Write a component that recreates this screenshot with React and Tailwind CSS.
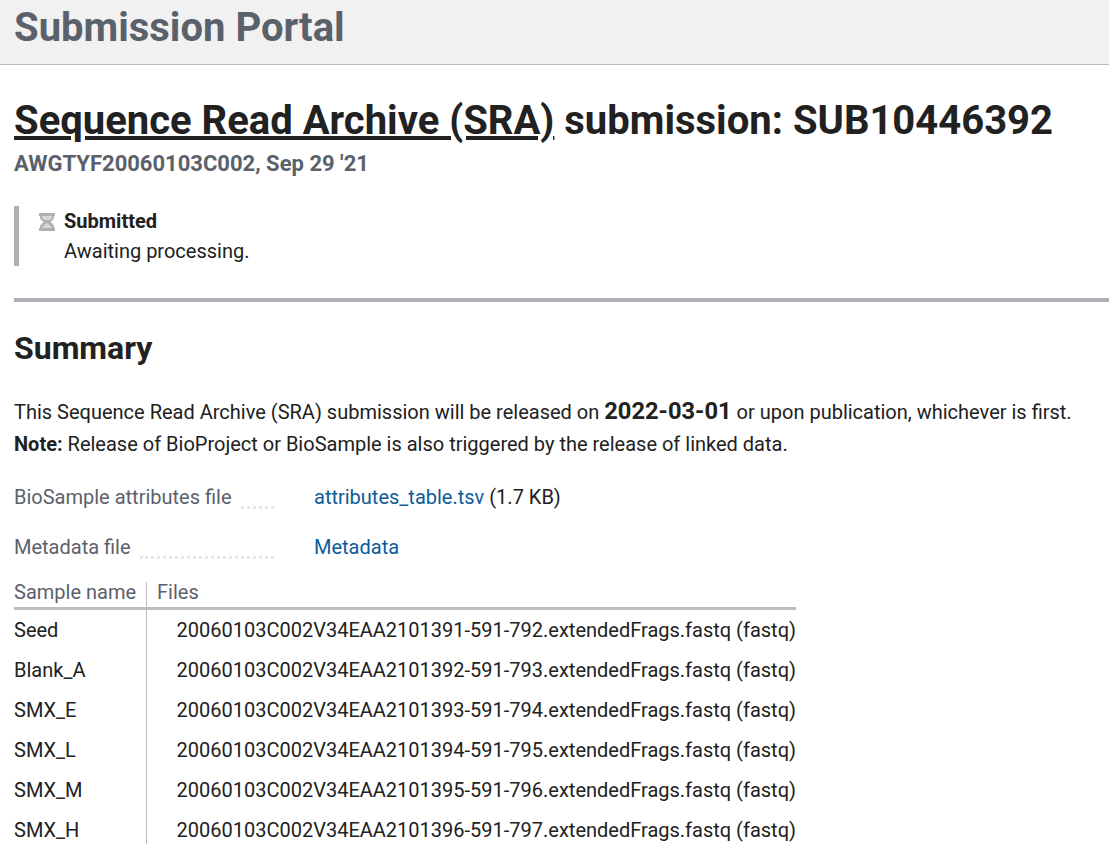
import React from 'react';

const rows = [
  ['Seed', '20060103C002V34EAA2101391-591-792.extendedFrags.fastq (fastq)'],
  ['Blank_A', '20060103C002V34EAA2101392-591-793.extendedFrags.fastq (fastq)'],
  ['SMX_E', '20060103C002V34EAA2101393-591-794.extendedFrags.fastq (fastq)'],
  ['SMX_L', '20060103C002V34EAA2101394-591-795.extendedFrags.fastq (fastq)'],
  ['SMX_M', '20060103C002V34EAA2101395-591-796.extendedFrags.fastq (fastq)'],
  ['SMX_H', '20060103C002V34EAA2101396-591-797.extendedFrags.fastq (fastq)'],
];

function Hourglass() {
  return (
    <svg width="16" height="18" viewBox="0 0 16 18" className="shrink-0">
      <path d="M0 0h16v3h-1v1c0 2-2 4-4 5 2 1 4 3 4 5v1h1v3H0v-3h1v-1c0-2 2-4 4-5-2-1-4-3-4-5V3H0z" fill="#d6d7d9" />
      <path d="M0 0h16v3h-1v1c0 2-2 4-4 5 2 1 4 3 4 5v1h1v3H0v-3h1v-1c0-2 2-4 4-5-2-1-4-3-4-5V3H0zM3 3v1c0 1 1 2 2 3h6c1-1 2-2 2-3V3zM8 10c-2 1-4 3-5 5h10c-1-2-3-4-5-5z" fill="#aeb0b5" fillRule="evenodd" />
    </svg>
  );
}

export default function App() {
  return (
    <div className="h-[844px] overflow-hidden bg-white text-[#212121] font-['Roboto',sans-serif]">
      <header className="h-[65px] bg-[#f1f1f1] border-b border-[#bdbdbd] pl-[14px]">
        <div className="text-[40px] leading-[56px] font-bold text-[#5b616b]">Submission Portal</div>
      </header>

      <div className="pl-[14px]">
        <h1 className="mt-[30px] text-[40px] leading-[52px] font-bold whitespace-nowrap">
          <span className="underline">Sequence Read Archive (SRA)</span> submission: SUB10446392
        </h1>
        <div className="mt-[3px] text-[22px] leading-[28px] font-bold text-[#5b616b]">AWGTYF20060103C002, Sep 29 '21</div>

        <div className="mt-[28px] h-[60px] border-l-[5px] border-[#aeb0b5] pl-[20px] flex gap-[9px]">
          <div className="pt-[7px]">
            <Hourglass />
          </div>
          <div className="text-[20px] leading-[30px]">
            <div className="font-bold">Submitted</div>
            <div>Awaiting processing.</div>
          </div>
        </div>

        <div className="mt-[32px] border-t-[4px] border-[#aeb0b5]" />

        <h2 className="mt-[25px] text-[32px] leading-[42px] font-bold">Summary</h2>

        <p className="mt-[26px] text-[20px] leading-[32px] whitespace-nowrap">
          This Sequence Read Archive (SRA) submission will be released on <span className="text-[23.7px] font-bold">2022-03-01</span> or upon publication, whichever is first.
        </p>
        <p className="text-[20px] leading-[32px] whitespace-nowrap">
          <span className="font-bold">Note:</span> Release of BioProject or BioSample is also triggered by the release of linked data.
        </p>

        <div className="mt-[21px] flex h-[50px] items-start text-[20px] leading-[32px]">
          <div className="w-[260px] flex text-[#5b616b]">
            <span>BioSample attributes file</span>
            <span className="ml-[9px] flex-1 mb-[4px] border-b-[3px] border-dotted border-[#e6e6e6]" />
          </div>
          <div className="ml-[40px]">
            <a className="text-[#0b5c99]">attributes_table.tsv</a> (1.7 KB)
          </div>
        </div>
        <div className="flex h-[51px] items-start text-[20px] leading-[32px]">
          <div className="w-[260px] flex text-[#5b616b]">
            <span>Metadata file</span>
            <span className="ml-[9px] flex-1 mb-[4px] border-b-[3px] border-dotted border-[#e6e6e6]" />
          </div>
          <div className="ml-[40px]">
            <a className="text-[#0b5c99]">Metadata</a>
          </div>
        </div>

        <div className="w-[782px] text-[20px]">
          <div className="flex h-[28px] border-b-[3px] border-[#bdbdbd] text-[#5b616b] leading-[20px]">
            <div className="w-[133px] border-r border-[#bdbdbd]">Sample name</div>
            <div className="pl-[10px]">Files</div>
          </div>
          {rows.map(([name, file]) => (
            <div key={name} className="flex h-[40px] items-center">
              <div className="w-[133px] h-full border-r border-[#bdbdbd] flex items-center">{name}</div>
              <div className="pl-[30px] whitespace-nowrap">{file}</div>
            </div>
          ))}
        </div>
      </div>
    </div>
  );
}
